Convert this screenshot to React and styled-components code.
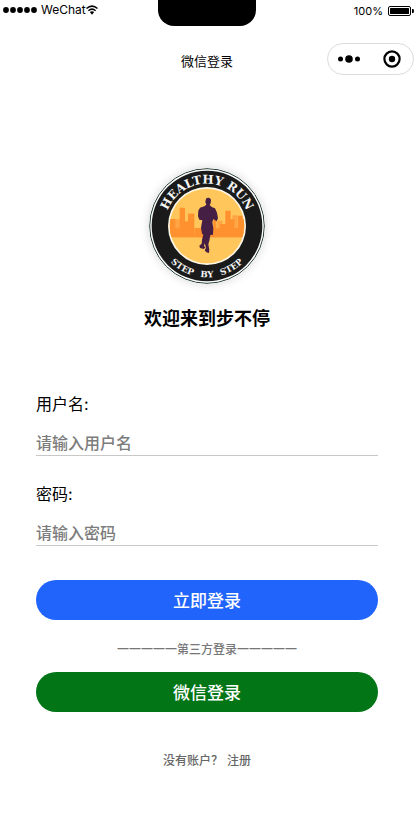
import React from 'react';
import styled, { createGlobalStyle } from 'styled-components';

const GlobalStyle = createGlobalStyle`
  * { box-sizing: border-box; }
  body {
    margin: 0;
    background: #fff;
    color: #000;
    font-family: Inter, "Noto Sans CJK SC", sans-serif;
  }
`;

const Page = styled.div`
  min-height: 100vh;
  padding-right: 5px;
`;

const StatusBar = styled.header`
  display: grid;
  grid-template-columns: 1fr 98px 1fr;
  height: 26px;
  line-height: 20px;
`;

const Carrier = styled.div`
  display: flex;
  align-items: center;
  height: 20px;
  padding-left: 3px;
  font-size: 12px;
`;

const SignalIcon = styled.svg`
  width: 34px;
  height: 6px;
  margin-right: 4px;
`;

const WifiIcon = styled.svg`
  width: 12px;
  height: 10px;
`;

const Notch = styled.div`
  background: #000;
  border-radius: 0 0 16px 16px;
`;

const Power = styled.div`
  display: flex;
  align-items: center;
  justify-content: flex-end;
  gap: 5px;
  height: 22px;
  font-size: 11px;
`;

const BatteryIcon = styled.svg`
  width: 26px;
  height: 10px;
`;

const NavBar = styled.nav`
  display: grid;
  grid-template-columns: 1fr auto 1fr;
  align-items: center;
  height: 32px;
  margin-top: 17px;
`;

const NavTitle = styled.h1`
  grid-column: 2;
  margin: 0;
  padding-top: 4px;
  font-size: 13px;
  font-weight: 400;
  line-height: 20px;
`;

const Capsule = styled.div`
  justify-self: end;
  display: flex;
  width: 87px;
  height: 32px;
  border: 1px solid #dcdcdc;
  border-radius: 16px;
`;

const CapsuleButton = styled.button`
  flex: 1;
  display: flex;
  align-items: center;
  justify-content: center;
  padding: 0;
  border: 0;
  background: none;
`;

const Main = styled.main`
  padding: 0 36px;
`;

const Brand = styled.section`
  display: flex;
  flex-direction: column;
  align-items: center;
  padding-top: 93px;
`;

const Logo = styled.svg`
  width: 116px;
  height: 116px;
  border-radius: 50%;
  box-shadow: 0 0 10px rgba(0, 0, 0, 0.16);
`;

const LogoText = styled.text`
  font-family: "DejaVu Serif", serif;
  font-size: ${({ $size }) => $size}px;
  font-weight: 700;
  text-anchor: middle;
  fill: #f4f4f4;
`;

const Welcome = styled.h2`
  margin: 22px 0 0;
  font-size: 18px;
  font-weight: 700;
  line-height: 26px;
`;

const Form = styled.form`
  display: flex;
  flex-direction: column;
  margin-top: 60px;
`;

const Field = styled.div`
  display: flex;
  flex-direction: column;
  height: 90px;
`;

const Label = styled.label`
  font-size: 16px;
  font-weight: 400;
  line-height: 24px;
`;

const Input = styled.input`
  width: 100%;
  height: 24px;
  margin-top: 16px;
  padding: 0 0 2px;
  border: 0;
  border-bottom: 1px solid #c8c8c8;
  outline: 0;
  background: none;
  color: #000;
  font-family: inherit;
  font-size: 16px;
  font-weight: 500;

  &::placeholder { color: #7c7c7c; opacity: 1; }
`;

const Button = styled.button`
  width: 100%;
  height: 40px;
  padding: 0 0 2px;
  border: 0;
  border-radius: 20px;
  background: ${({ $wechat }) => ($wechat ? '#027516' : '#2064fb')};
  color: #fff;
  font-family: inherit;
  font-size: 17px;
  font-weight: 500;
`;

const SubmitButton = styled(Button)`
  margin-top: 8px;
`;

const Divider = styled.p`
  margin: 20px 0 12px;
  color: #777;
  font-size: 12px;
  font-weight: 500;
  line-height: 20px;
  text-align: center;
`;

const Footer = styled.footer`
  display: flex;
  justify-content: center;
  gap: 4px;
  margin-top: 39px;
  color: #666;
  font-size: 12px;
  font-weight: 500;
  line-height: 20px;
`;

const RegisterLink = styled.a`
  color: inherit;
  text-decoration: none;
`;

function RunLogo() {
  return (
    <Logo viewBox="0 0 348 348" role="img" aria-label="Healthy Run, Step by Step">
      <defs>
        <path id="top-arc" d="M47 174A127 127 0 0 1 301 174" />
        <path id="bottom-arc" d="M20 174A154 154 0 0 0 328 174" />
        <clipPath id="scene"><circle cx="174" cy="174" r="112" /></clipPath>
      </defs>
      <circle cx="174" cy="174" r="172" fill="#fff" stroke="#263c34" strokeWidth="3" />
      <circle cx="174" cy="174" r="166" fill="#191a19" />
      <circle cx="174" cy="174" r="117" fill="#fff8e9" />
      <circle cx="174" cy="174" r="112" fill="#ffc65c" />
      <g clipPath="url(#scene)">
        <path fill="#ffa544" d="M62 180H80V154H101V182H120V136H135V207H205V158H220V178H250V142H266V207H290V208H62Z" />
        <path fill="#ff912f" d="M62 153H80V181H92V119H108V160H117V138H136V208H62ZM193 151H202V181H213V168H229V128H245V154H256V180H267V143H281V153H290V208H193Z" />
        <path fill="#ff912f" d="M136 180H200V208H136Z" />
      </g>
      <g fill="#452044">
        <path d="M171 92C175 88 183 89 186 95L185 106L182 111L188 117L198 121L204 134L207 151L203 160L193 153L190 163L193 180L192 200L184 201L181 219L178 228L181 246L180 255L172 253L167 247L171 240L167 224L166 202L159 197L156 179L160 157L151 155L147 145L148 128L153 119L166 115L172 110L169 102Z" />
        <path d="M164 196L172 211L168 225L165 233L169 239L164 243L153 240L151 233L158 227L159 215Z" />
      </g>
      <LogoText $size={36}><textPath href="#top-arc" startOffset="50%">HEALTHY RUN</textPath></LogoText>
      <LogoText $size={26}><textPath href="#bottom-arc" startOffset="33%">STEP</textPath></LogoText>
      <LogoText $size={26}><textPath href="#bottom-arc" startOffset="50%">BY</textPath></LogoText>
      <LogoText $size={26}><textPath href="#bottom-arc" startOffset="67%">STEP</textPath></LogoText>
    </Logo>
  );
}

export default function App() {
  return (
    <>
      <GlobalStyle />
      <Page>
        <StatusBar>
          <Carrier>
            <SignalIcon viewBox="0 0 34 6" aria-hidden="true">
              {[3, 10, 17, 24, 31].map((x) => <circle key={x} cx={x} cy="3" r="2.9" />)}
            </SignalIcon>
            WeChat
            <WifiIcon viewBox="0 0 12 10" aria-hidden="true">
              <g fill="none" stroke="#000" strokeWidth="1.5">
                <path d="M.5 3.5Q6-1.3 11.5 3.5" />
                <path d="M2.4 5.7Q6 2.6 9.6 5.7" />
              </g>
              <path d="M3.8 7.1Q6 5.4 8.2 7.1L6 9.7Z" />
            </WifiIcon>
          </Carrier>
          <Notch />
          <Power>
            100%
            <BatteryIcon viewBox="0 0 26 10" aria-hidden="true">
              <rect x=".5" y=".5" width="22" height="9" rx="1.5" fill="none" stroke="#000" />
              <rect x="2" y="2" width="19" height="6" rx=".5" />
              <path d="M24 3H25Q26 3 26 5T25 7H24Z" />
            </BatteryIcon>
          </Power>
        </StatusBar>
        <NavBar>
          <NavTitle>微信登录</NavTitle>
          <Capsule>
            <CapsuleButton type="button" aria-label="更多">
              <svg width="22" height="8" viewBox="0 0 22 8">
                <circle cx="2.5" cy="4" r="2.5" /><circle cx="11" cy="4" r="3.8" /><circle cx="19.5" cy="4" r="2.5" />
              </svg>
            </CapsuleButton>
            <CapsuleButton type="button" aria-label="关闭">
              <svg width="18" height="18" viewBox="0 0 18 18">
                <circle cx="9" cy="9" r="7.6" fill="none" stroke="#000" strokeWidth="2.2" /><circle cx="9" cy="9" r="3.2" />
              </svg>
            </CapsuleButton>
          </Capsule>
        </NavBar>
        <Main>
          <Brand>
            <RunLogo />
            <Welcome>欢迎来到步不停</Welcome>
          </Brand>
          <Form onSubmit={(event) => event.preventDefault()}>
            <Field>
              <Label htmlFor="username">用户名:</Label>
              <Input id="username" type="text" placeholder="请输入用户名" />
            </Field>
            <Field>
              <Label htmlFor="password">密码:</Label>
              <Input id="password" type="password" placeholder="请输入密码" />
            </Field>
            <SubmitButton type="submit">立即登录</SubmitButton>
            <Divider>一一一一一第三方登录一一一一一</Divider>
            <Button type="button" $wechat>微信登录</Button>
          </Form>
          <Footer>
            <span>没有账户？</span>
            <RegisterLink href="#register">注册</RegisterLink>
          </Footer>
        </Main>
      </Page>
    </>
  );
}
